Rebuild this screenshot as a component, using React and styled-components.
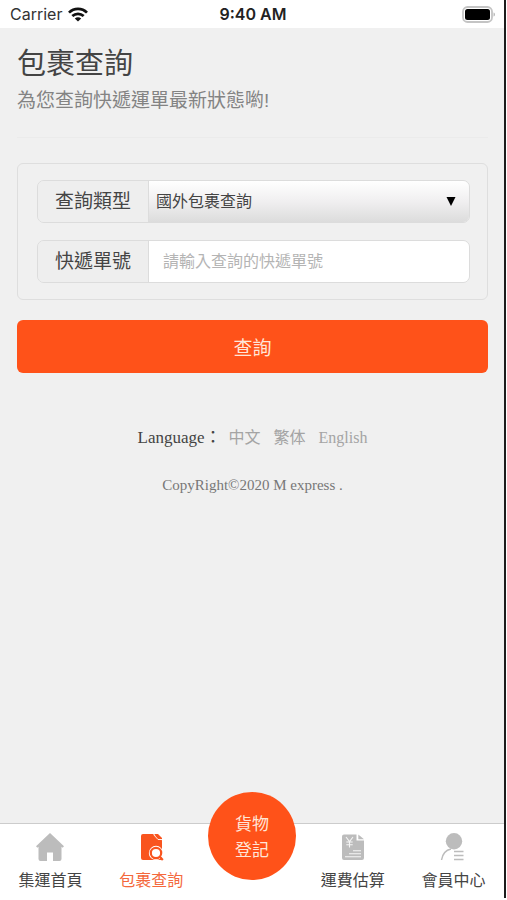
import styled, { createGlobalStyle } from "styled-components";

const tabs = [
  { name: "集運首頁", icon: "home" },
  { name: "包裹查詢", icon: "search", active: true },
  { name: "貨物登記", round: true },
  { name: "運費估算", icon: "price" },
  { name: "會員中心", icon: "member" },
];

const languages = ["中文", "繁体", "English"];

const WifiIcon = () => (
  <svg width="20" height="15" viewBox="0 0 20 15" aria-hidden="true">
    <g fill="none" stroke="#111" strokeWidth="2.7">
      <path d="M1 5.6C6 .6 14 .6 19 5.6" />
      <path d="M4.3 9.1C7.6 6 12.4 6 15.7 9.1" />
    </g>
    <path d="M10 14.6 6.8 11.5C8.6 9.9 11.4 9.9 13.2 11.5Z" fill="#111" />
  </svg>
);

const BatteryIcon = () => (
  <svg width="34" height="17" viewBox="0 0 34 17" aria-hidden="true">
    <rect x="1" y="1" width="29" height="15" rx="4.5" fill="#fff" stroke="#c4c4c4" strokeWidth="1.8" />
    <rect x="3" y="3" width="25" height="11" rx="2.5" fill="#000" />
    <path d="M31.5 6.5c2 .5 2 3.5 0 4z" fill="#bbb" />
  </svg>
);

const TabIcon = ({ name }) => (
  <svg width="28" height="28" viewBox="0 0 28 28" fill="currentColor" aria-hidden="true">
    {name === "home" && (
      <path d="M14 0 28 13.3 26.6 14.8 25.5 13.8V26a2 2 0 0 1-2 2H17v-8.5h-6V28H4.5a2 2 0 0 1-2-2V13.8L1.4 14.8 0 13.3Z" />
    )}
    {name === "search" && (
      <>
        <path d="M5 1h11.5L25 7.5V25.500a1.500 1.500 0 0 1-1.500 1.500H6a2 2 0 0 1-2-2V3a2 2 0 0 1 2-2Z" />
        <path d="M17.5 1H21l4 4v2.500h-4Z" />
        <path d="m16.500 1.500 4.500 5h4" fill="none" stroke="#fff" strokeWidth="0.900" />
        <circle cx="19" cy="20" r="7.200" fill="#fff" />
        <circle cx="19" cy="20" r="5.200" fill="#fff" stroke="currentColor" strokeWidth="2.200" />
        <path d="m22.800 23.800 3 3.200" stroke="currentColor" strokeWidth="2.200" />
      </>
    )}
    {name === "price" && (
      <>
        <path d="M5 1.5h12.500v6H25V25a2 2 0 0 1-2 2H5a2 2 0 0 1-2-2V3.500a2 2 0 0 1 2-2Z" />
        <path d="M19.300 1.500 25 6.300h-5.700Z" />
        <path
          d="m7 4 3.500 4.500L14 4M10.500 8.500v6M7.300 9h6.400M7.300 11.800h6.400M14 17.800h8M10 20.800h12M6 23.800h16"
          fill="none"
          stroke="#f5f5f5"
          strokeWidth="1.1"
        />
      </>
    )}
    {name === "member" && (
      <>
        <circle cx="14" cy="8.3" r="8.2" />
        <path d="M1.500 27C2.500 21 6 17 11 16" fill="none" stroke="currentColor" strokeWidth="1.5" />
        <path d="M14 18.500h9.500M14 22.500h9.500M14 26.500h9.500" fill="none" stroke="currentColor" strokeWidth="1.300" />
      </>
    )}
  </svg>
);

const App = () => {
  return (
    <Page lang="zh-Hant">
      <GlobalStyle />
      <Screen>
        <StatusBar>
          <Carrier>
            Carrier <WifiIcon />
          </Carrier>
          <Clock>9:40 AM</Clock>
          <Battery>
            <BatteryIcon />
          </Battery>
        </StatusBar>

        <Content>
          <Header>
            <Title>包裹查詢</Title>
            <Subtitle>為您查詢快遞運單最新狀態喲!</Subtitle>
          </Header>

          <form onSubmit={(e) => e.preventDefault()}>
            <Panel>
              <Field>
                <Label htmlFor="type">查詢類型</Label>
                <SelectWrapper>
                  <Select id="type">
                    <option>國外包裹查詢</option>
                  </Select>
                  <Arrow aria-hidden="true" width="10" height="9" viewBox="0 0 10 9">
                    <path d="M0.5 0h9L5 9Z" />
                  </Arrow>
                </SelectWrapper>
              </Field>
              <Field>
                <Label htmlFor="number">快遞單號</Label>
                <Input id="number" type="text" placeholder="請輸入查詢的快遞單號" />
              </Field>
            </Panel>
            <SubmitButton type="submit">查詢</SubmitButton>
          </form>

          <Footer>
            <LanguageBar>
              <LanguageTitle>Language：</LanguageTitle>
              <Languages>
                {languages.map((language) => (
                  <LanguageLink key={language} href="#">
                    {language}
                  </LanguageLink>
                ))}
              </Languages>
            </LanguageBar>
            <Copyright>CopyRight©2020 M express .</Copyright>
          </Footer>
        </Content>

        <TabBar>
          {tabs.map((tab) =>
            tab.round ? (
              <RoundSlot key={tab.name}>
                <RoundTab href="#">{tab.name}</RoundTab>
              </RoundSlot>
            ) : (
              <Tab key={tab.name} href="#" $active={tab.active}>
                <TabIcon name={tab.icon} />
                <TabName $active={tab.active}>{tab.name}</TabName>
              </Tab>
            )
          )}
        </TabBar>
      </Screen>
    </Page>
  );
};

const GlobalStyle = createGlobalStyle`
  * {
    box-sizing: border-box;
  }

  body {
    margin: 0;
    background-color: #fff;
    font-family: "Liberation Sans", "Noto Sans CJK TC", sans-serif;
  }

  input,
  select,
  button {
    font-family: inherit;
  }
`;

const Page = styled.div`
  display: flex;
  min-height: 100vh;
  padding-bottom: 2px;
`;

const Screen = styled.div`
  flex: 1;
  display: flex;
  flex-direction: column;
  margin-right: 1px;
  border-right: 2px solid #1c1c1c;
  background-color: #f0f0f0;
`;

const StatusBar = styled.div`
  display: grid;
  grid-template-columns: 1fr auto 1fr;
  align-items: center;
  height: 28px;
  padding: 0 8px 0 10px;
  background-color: #fff;
  font-family: Inter, sans-serif;
  font-size: 16px;
  color: #333;
`;

const Carrier = styled.div`
  display: flex;
  align-items: center;
  gap: 6px;
`;

const Clock = styled.div`
  font-weight: 600;
  color: #222;
`;

const Battery = styled.div`
  display: flex;
  justify-content: flex-end;
`;

const Content = styled.main`
  flex: 1;
  padding: 0 16px 0 17px;
`;

const Header = styled.header`
  height: 110px;
  margin-bottom: 25px;
  padding-top: 16px;
  border-bottom: 1px solid #ebebeb;
`;

const Title = styled.h1`
  margin: 0;
  font-size: 29px;
  font-weight: 400;
  line-height: 40px;
  color: #444;
`;

const Subtitle = styled.p`
  margin: 0;
  font-size: 19px;
  line-height: 34px;
  color: #838383;
`;

const Panel = styled.div`
  display: flex;
  flex-direction: column;
  gap: 17px;
  padding: 16px 17px 16px 19px;
  border: 1px solid #dedede;
  border-radius: 6px;
`;

const Field = styled.div`
  display: flex;
  height: 43px;
  border: 1px solid #dcdcdc;
  border-radius: 7px;
  overflow: hidden;
`;

const Label = styled.label`
  flex: none;
  width: 111px;
  border-right: 1px solid #dcdcdc;
  background-color: #eee;
  font-size: 19px;
  line-height: 42px;
  text-align: center;
  color: #444;
`;

const SelectWrapper = styled.div`
  position: relative;
  flex: 1;
  display: flex;
`;

const Select = styled.select`
  flex: 1;
  appearance: none;
  padding: 0 40px 0 7px;
  border: 0;
  background: linear-gradient(#fff, #f0eff0 50%, #dcdcdc);
  font-size: 16px;
  color: #444;
`;

const Arrow = styled.svg`
  position: absolute;
  top: 16px;
  right: 13px;
  pointer-events: none;
`;

const Input = styled.input`
  flex: 1;
  min-width: 0;
  padding: 0 14px;
  border: 0;
  background-color: #fff;
  font-size: 16px;
  color: #444;

  &::placeholder {
    color: #b4b4b4;
  }
`;

const SubmitButton = styled.button`
  display: block;
  width: 100%;
  height: 53px;
  margin-top: 20px;
  border: 0;
  border-radius: 6px;
  background-color: #ff5219;
  font-size: 19px;
  color: #ffe6d8;
`;

const Footer = styled.footer`
  padding-top: 53px;
  font-family: "Liberation Serif", "Noto Sans CJK TC", serif;
  text-align: center;
`;

const LanguageBar = styled.div`
  display: flex;
  justify-content: center;
  align-items: baseline;
  gap: 7px;
  line-height: 24px;
`;

const Languages = styled.div`
  display: flex;
  gap: 13px;
`;

const LanguageTitle = styled.span`
  font-size: 17px;
  color: #444;
`;

const LanguageLink = styled.a`
  font-size: 16px;
  color: #a4a4a4;
  text-decoration: none;
`;

const Copyright = styled.p`
  margin: 23px 0;
  font-size: 15px;
  line-height: 24px;
  color: #777;
`;

const TabBar = styled.nav`
  display: grid;
  grid-template-columns: repeat(5, 1fr);
  height: 75px;
  border-top: 1px solid #ccc;
  background-color: #fff;
`;

const Tab = styled.a`
  display: flex;
  flex-direction: column;
  align-items: center;
  padding-top: 9px;
  color: ${(props) => (props.$active ? "#f9541e" : "#bcbcbc")};
  text-decoration: none;
`;

const TabName = styled.span`
  margin-top: 8px;
  font-size: 16px;
  line-height: 24px;
  color: ${(props) => (props.$active ? "#f4683c" : "#444")};
`;

const RoundSlot = styled.div`
  display: flex;
  justify-content: center;
`;

// sticks out over the top edge of the tab bar
const RoundTab = styled.a`
  display: flex;
  align-items: center;
  width: 88px;
  height: 88px;
  margin-top: -32px;
  padding: 3px 27px 0;
  border-radius: 50%;
  background-color: #ff5219;
  font-size: 17px;
  line-height: 26px;
  color: #ffe6d8;
  text-decoration: none;
`;

export default App;
